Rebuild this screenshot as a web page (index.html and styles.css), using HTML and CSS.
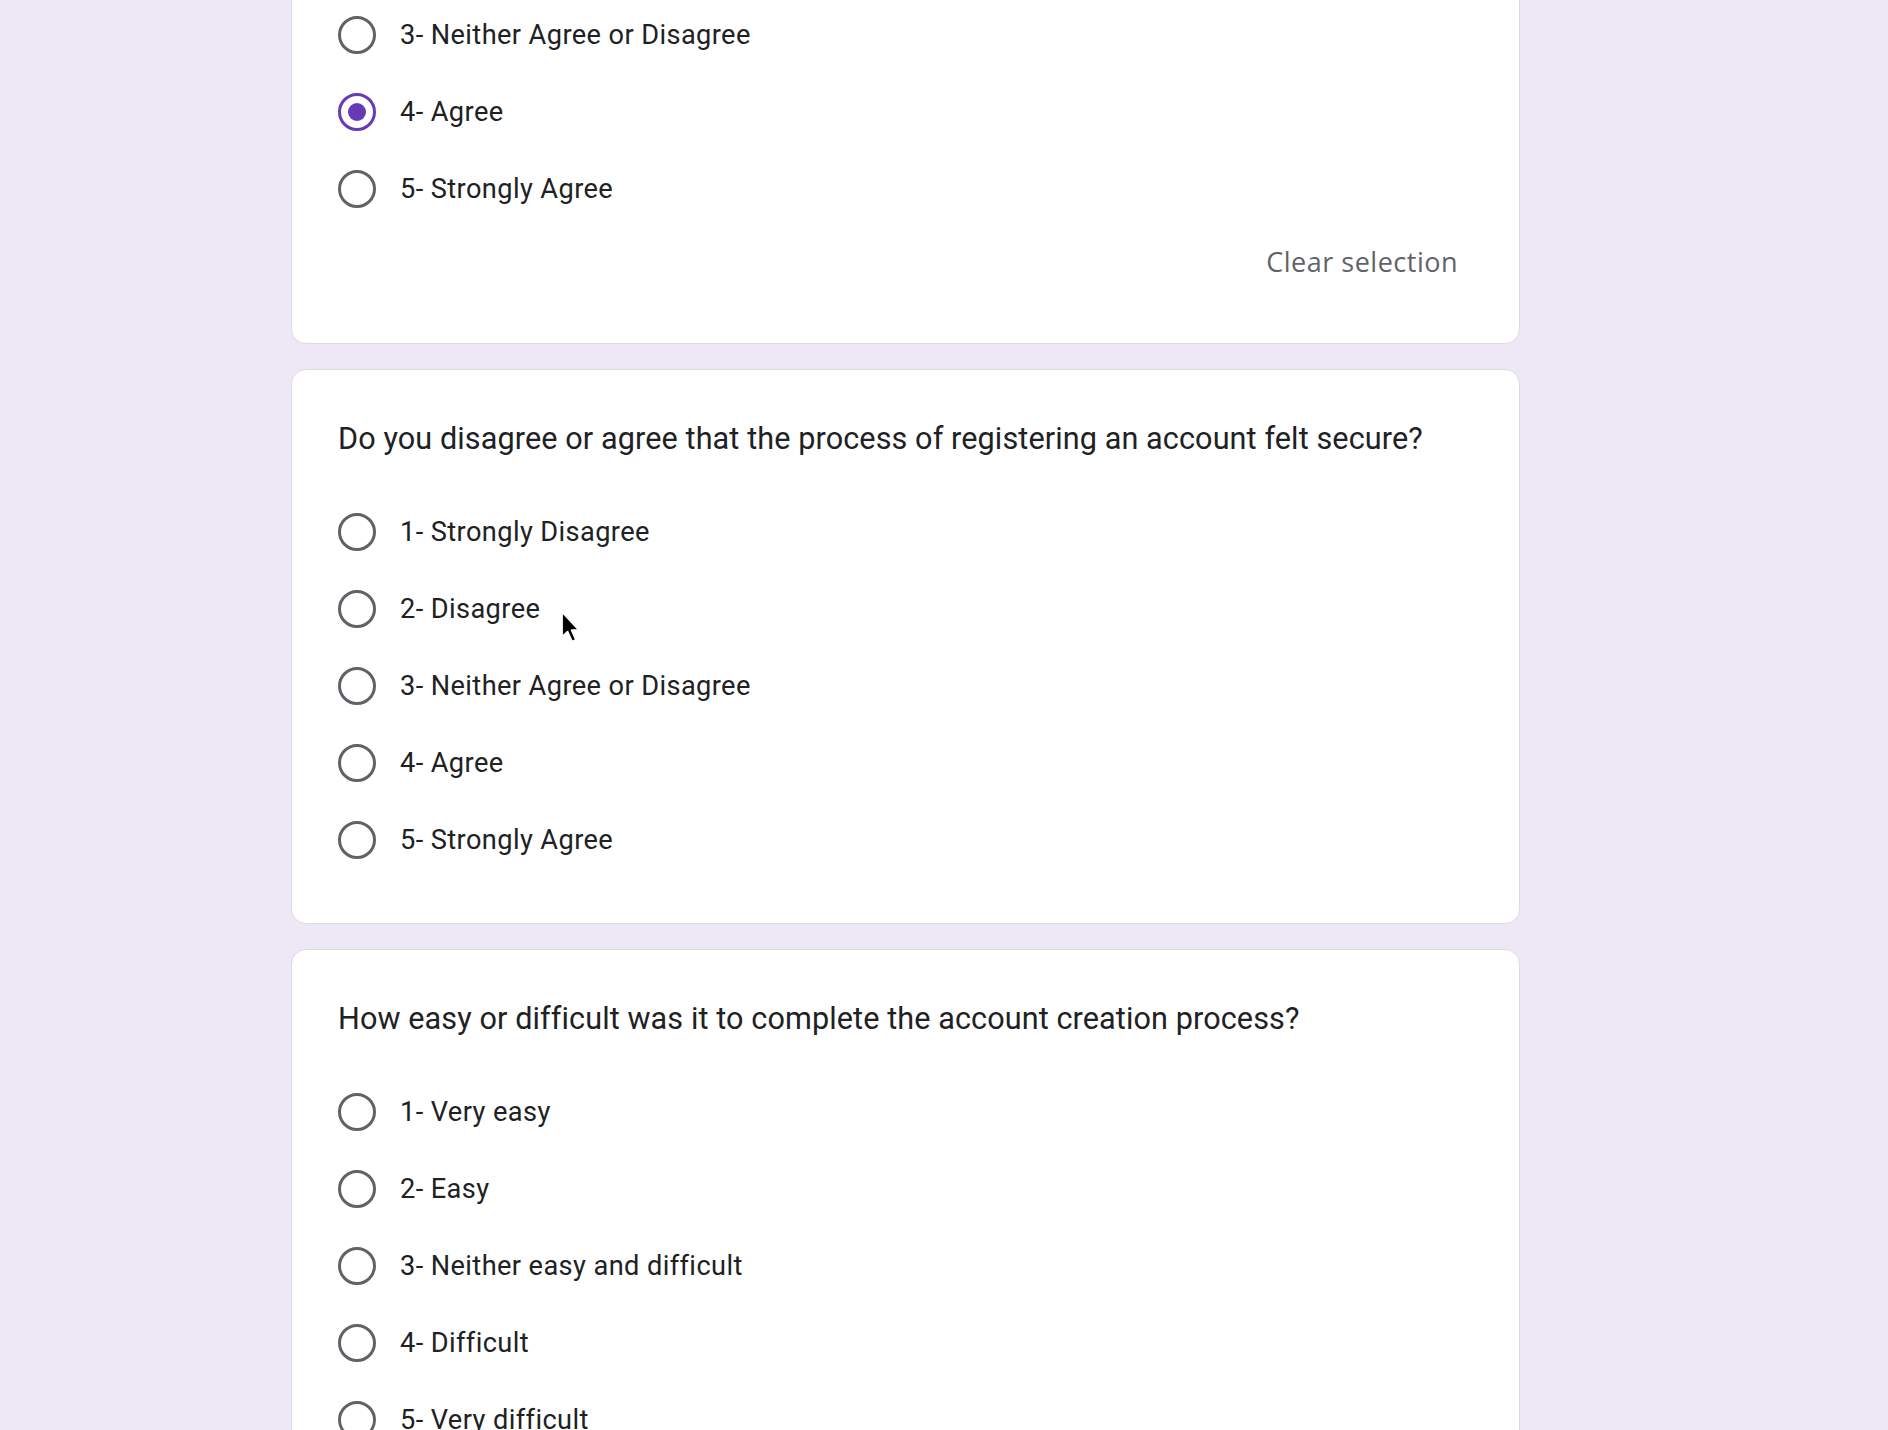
FILE: index.html
```html
<!DOCTYPE html>
<html lang="en">
<head>
<meta charset="utf-8">
<title>Account creation survey</title>
<link rel="stylesheet" href="styles.css">
</head>
<body>
<main class="form">
  <section class="card">
    <div class="question">Do you disagree or agree that the process of creating an account was easy?</div>
    <div class="options">
      <div class="option"><span class="radio"></span><span class="label">1- Strongly Disagree</span></div>
      <div class="option"><span class="radio"></span><span class="label">2- Disagree</span></div>
      <div class="option"><span class="radio"></span><span class="label">3- Neither Agree or Disagree</span></div>
      <div class="option"><span class="radio checked"></span><span class="label">4- Agree</span></div>
      <div class="option"><span class="radio"></span><span class="label">5- Strongly Agree</span></div>
    </div>
    <div class="actions"><span class="clear">Clear selection</span></div>
  </section>

  <section class="card">
    <div class="question">Do you disagree or agree that the process of registering an account felt secure?</div>
    <div class="options">
      <div class="option"><span class="radio"></span><span class="label">1- Strongly Disagree</span></div>
      <div class="option"><span class="radio"></span><span class="label">2- Disagree</span>
        <svg class="cursor" width="22" height="34" viewBox="0 0 22 34"><path d="M2 2 L2 27 L7.6 21.6 L12 31.5 L16 29.8 L11.6 20.2 L19 20.2 Z" fill="#000" stroke="#fff" stroke-width="1.8" stroke-linejoin="round"/></svg>
      </div>
      <div class="option"><span class="radio"></span><span class="label">3- Neither Agree or Disagree</span></div>
      <div class="option"><span class="radio"></span><span class="label">4- Agree</span></div>
      <div class="option"><span class="radio"></span><span class="label">5- Strongly Agree</span></div>
    </div>
  </section>

  <section class="card">
    <div class="question">How easy or difficult was it to complete the account creation process?</div>
    <div class="options">
      <div class="option"><span class="radio"></span><span class="label">1- Very easy</span></div>
      <div class="option"><span class="radio"></span><span class="label">2- Easy</span></div>
      <div class="option"><span class="radio"></span><span class="label">3- Neither easy and difficult</span></div>
      <div class="option"><span class="radio"></span><span class="label">4- Difficult</span></div>
      <div class="option"><span class="radio"></span><span class="label">5- Very difficult</span></div>
    </div>
  </section>
</main>
</body>
</html>
```
FILE: styles.css
```css
html, body {
  margin: 0;
  padding: 0;
  background: #ede7f6;
  overflow: hidden;
}
body {
  height: 1430px;
  font-family: Roboto, "Liberation Sans", sans-serif;
  color: #202124;
}
.form {
  width: 1229px;
  margin-left: 291px;
  margin-top: -282px;
  display: flex;
  flex-direction: column;
  gap: 25px;
}
.card {
  background: #fff;
  border: 1px solid #dadce0;
  border-radius: 15px;
  padding: 46px 46px 45px;
}
.card:first-child {
  padding-bottom: 47px;
}
.question {
  font-size: 30.6px;
  line-height: 46px;
  letter-spacing: 0.1px;
  margin-bottom: 31px;
}
.options {
  display: flex;
  flex-direction: column;
}
.option {
  position: relative;
  height: 77px;
  display: flex;
  align-items: center;
  gap: 24px;
}
.radio {
  box-sizing: border-box;
  width: 38px;
  height: 38px;
  border: 3.6px solid #5f6368;
  border-radius: 50%;
  flex: none;
  display: flex;
  align-items: center;
  justify-content: center;
}
.radio.checked {
  border-color: #673ab7;
}
.radio.checked::after {
  content: "";
  width: 18px;
  height: 18px;
  border-radius: 50%;
  background: #673ab7;
}
.label {
  font-size: 27.2px;
  letter-spacing: 0.4px;
  line-height: 38px;
}
.actions {
  display: flex;
  justify-content: flex-end;
  height: 69px;
  align-items: center;
  margin-right: 15px;
}
.clear {
  font-family: "Open Sans", sans-serif;
  font-size: 27px;
  font-weight: 500;
  color: #5f6368;
  letter-spacing: 0.5px;
}
.cursor {
  position: absolute;
  left: 222px;
  top: 40px;
}
```
